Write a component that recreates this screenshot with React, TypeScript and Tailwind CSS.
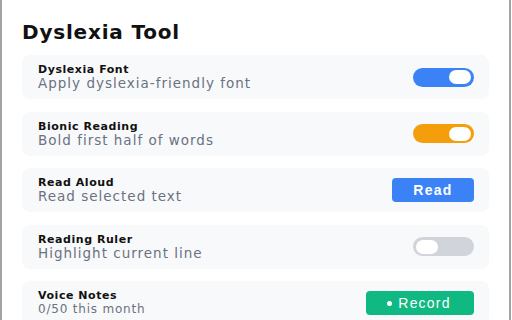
import React from "react";

type Row = {
  title: string;
  subtitle: string;
  control: React.ReactNode;
};

const Toggle = ({ on, color }: { on: boolean; color: string }) => (
  <div
    className={`flex h-[19px] w-[61px] items-center rounded-full px-[3px] ${color} ${
      on ? "justify-end" : "justify-start"
    }`}
  >
    <div className="h-[14px] w-[22px] rounded-full bg-white" />
  </div>
);

const rows: Row[] = [
  {
    title: "Dyslexia Font",
    subtitle: "Apply dyslexia-friendly font",
    control: <Toggle on color="bg-[#3b82f6]" />,
  },
  {
    title: "Bionic Reading",
    subtitle: "Bold first half of words",
    control: <Toggle on color="bg-[#f59e0b]" />,
  },
  {
    title: "Read Aloud",
    subtitle: "Read selected text",
    control: (
      <button
        type="button"
        className="flex h-[24px] w-[82px] items-center justify-center rounded-[4px] bg-[#3b82f6] font-['Liberation_Sans',sans-serif] text-[14px] font-bold tracking-[1.3px] text-white"
      >
        Read
      </button>
    ),
  },
  {
    title: "Reading Ruler",
    subtitle: "Highlight current line",
    control: <Toggle on={false} color="bg-[#d1d5db]" />,
  },
  {
    title: "Voice Notes",
    subtitle: "0/50 this month",
    control: (
      <button
        type="button"
        className="flex h-[24px] w-[108px] items-center justify-center gap-[6px] rounded-[4px] bg-[#10b981] pr-[2px] font-['Liberation_Sans',sans-serif] text-[14px] tracking-[1.2px] text-white"
      >
        <span className="h-[5px] w-[5px] rounded-full bg-white" />
        Record
      </button>
    ),
  },
];

export default function App() {
  return (
    <div className="flex h-[320px] w-[512px] overflow-hidden bg-white font-['DejaVu_Sans',sans-serif]">
      <div className="w-[2px] bg-[#a3a3a3]" />
      <div className="flex flex-1 flex-col px-[20px] pt-[20px]">
        <h1 className="mb-[11px] text-[20px] font-bold leading-[24px] tracking-[0.8px] text-[#111]">
          Dyslexia Tool
        </h1>
        <div className="flex flex-col gap-[12.5px]">
          {rows.map((row) => (
            <div
              key={row.title}
              className="flex h-[44px] w-[467px] shrink-0 items-center justify-between rounded-[8px] bg-[#f8f9fb] pl-[16px] pr-[15px]"
            >
              <div className="flex flex-col">
                <span className="text-[11px] font-bold leading-[13px] tracking-[0.55px] text-[#111]">
                  {row.title}
                </span>
                <span
                  className={`leading-[15px] text-[#6b7280] ${
                    row.title === "Voice Notes"
                      ? "text-[12px] tracking-[0.8px]"
                      : "text-[13.5px] tracking-[1px]"
                  }`}
                >
                  {row.subtitle}
                </span>
              </div>
              {row.control}
            </div>
          ))}
        </div>
      </div>
      <div className="mr-[1px] w-[2px] bg-[#a3a3a3]" />
    </div>
  );
}
